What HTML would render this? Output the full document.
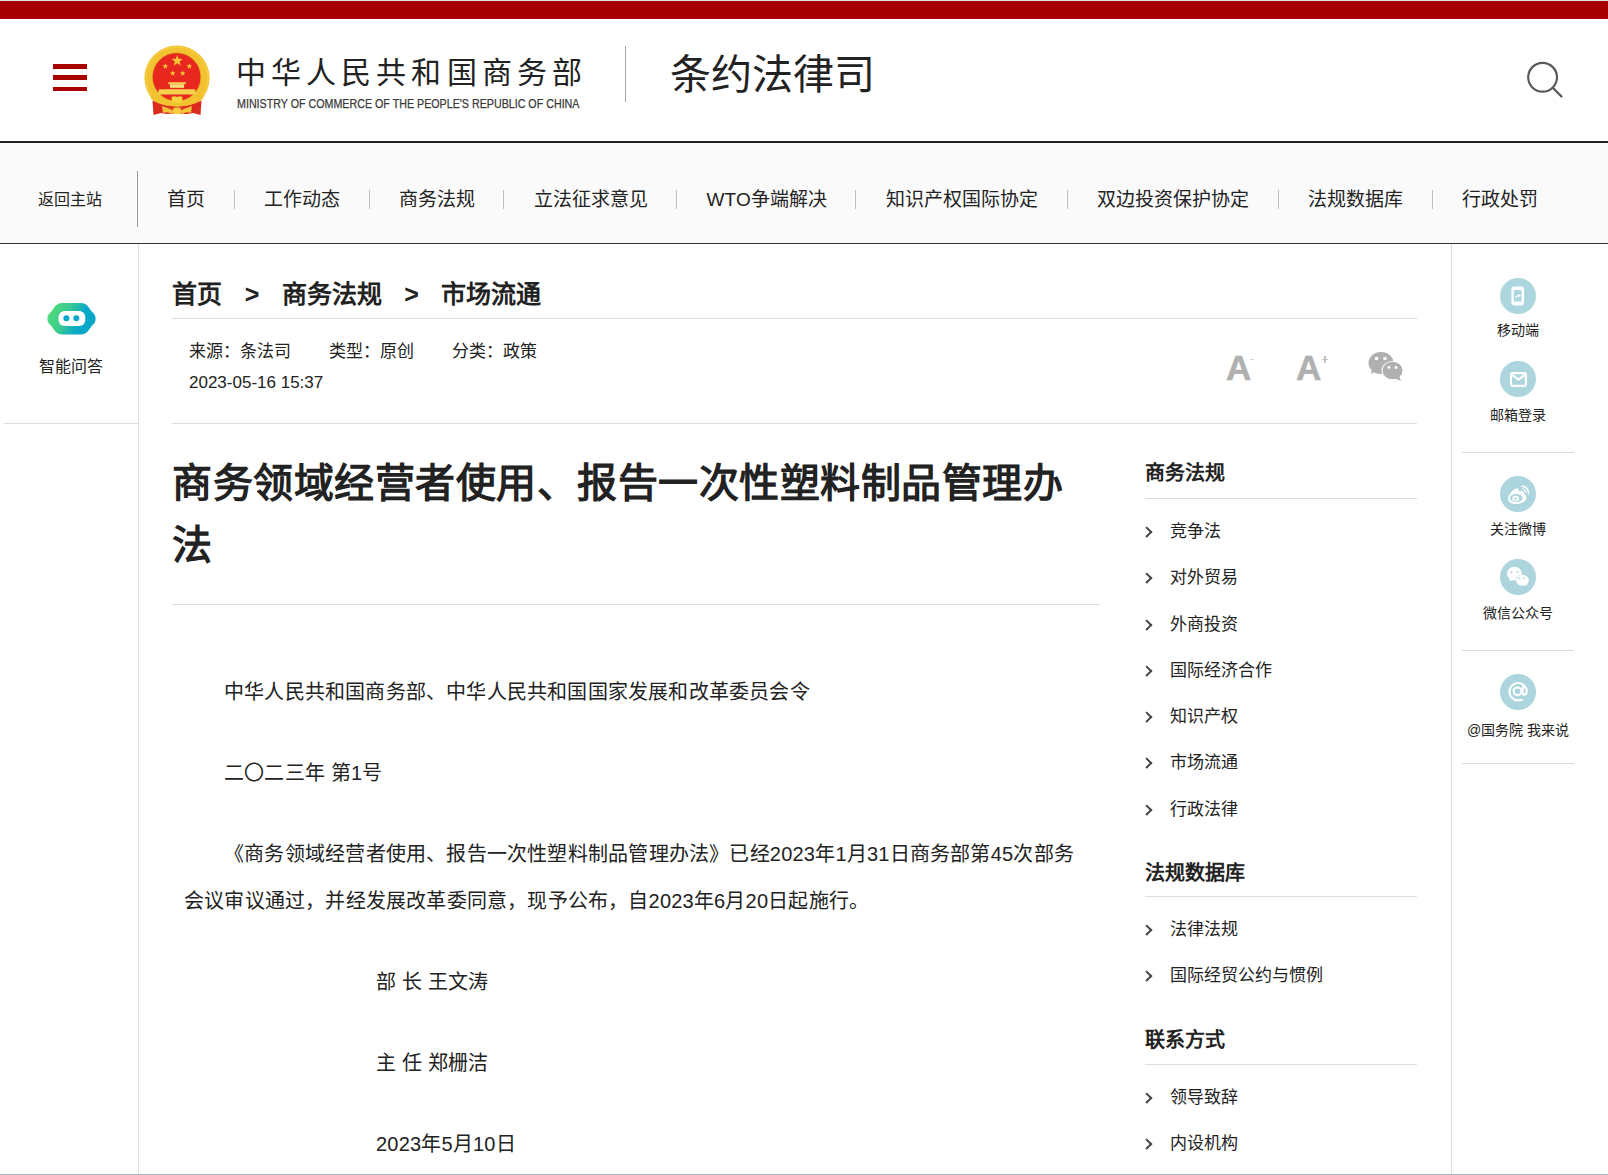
<!DOCTYPE html>
<html lang="zh-CN">
<head>
<meta charset="utf-8">
<title>商务领域经营者使用、报告一次性塑料制品管理办法</title>
<style>
*{margin:0;padding:0;box-sizing:border-box;}
html,body{width:1608px;height:1175px;overflow:hidden;background:#fff;}
body{font-family:"Liberation Sans",sans-serif;color:#222;position:relative;}
.abs{position:absolute;}
/* top bar */
.topline{left:0;top:0;width:1608px;height:1px;background:#dde6e6;}
.redbar{left:0;top:1px;width:1608px;height:18px;background:#a80000;}
/* header */
.burger{left:53px;width:34px;background:#a80000;}
.emblem{left:143px;top:44px;width:68px;height:72px;}
.cn-name{left:236px;top:54px;font-size:30px;line-height:38px;letter-spacing:5.1px;color:#222;white-space:nowrap;}
.en-name{left:237px;top:96px;font-size:12px;line-height:16px;color:#3a3a3a;white-space:nowrap;transform:scaleX(0.891);transform-origin:0 0;-webkit-text-stroke:0.25px #3a3a3a;}
.hdiv{left:625px;top:46px;width:1px;height:56px;background:#a6a6a6;}
.dept{left:670px;top:47.5px;font-size:41px;line-height:54px;color:#222;white-space:nowrap;}
.hline{left:0;top:141px;width:1608px;height:2px;background:#222;}
/* nav */
.nav{left:0;top:143px;width:1608px;height:100px;background:#fafafa;}
.navline{left:0;top:243px;width:1608px;height:1px;background:#333;}
.back{left:38px;top:188.5px;font-size:16px;line-height:22px;color:#222;white-space:nowrap;}
.navdiv{left:137px;top:171px;width:1px;height:56px;background:#9a9a9a;}
.menu{left:138px;top:188px;white-space:nowrap;font-size:0;}
.menu span{display:inline-block;font-size:19px;line-height:24px;color:#222;padding:0 29.25px;position:relative;letter-spacing:0.08px;}
.menu span+span::before{content:"";position:absolute;left:-1px;top:2px;width:1px;height:19px;background:#bfbfbf;}
/* side lines */
.lside{left:138px;top:244px;width:1px;height:931px;background:#ddd;}
.rside{left:1451px;top:244px;width:1px;height:931px;background:#ddd;}
.bottomline{left:0;top:1174px;width:1608px;height:1px;background:#adb3bf;}
.gray{background:#ddd;height:1px;}
.lbl{font-size:16px;line-height:20px;color:#222;white-space:nowrap;}
/* breadcrumb */
.crumb{left:172px;top:278px;font-size:25px;line-height:32px;font-weight:bold;color:#222;white-space:nowrap;}
.meta{left:189px;top:340px;font-size:17px;line-height:24px;color:#222;white-space:nowrap;}
.date{left:189px;top:371px;font-size:17px;line-height:24px;color:#222;white-space:nowrap;}
.title{left:172px;top:452px;width:915px;font-size:40px;letter-spacing:0.5px;line-height:62px;font-weight:bold;color:#222;}
.body{left:184px;top:669px;width:890px;font-size:20px;line-height:47px;color:#222;text-align:justify;letter-spacing:0.2px;}
.body p{margin-bottom:34px;text-indent:40px;}
/* right menu */
.rmenu{left:1145px;width:272px;}
.rhead{font-size:20px;line-height:28px;font-weight:bold;color:#222;white-space:nowrap;}
.ritem{font-size:17px;line-height:24px;color:#222;white-space:nowrap;padding-left:25px;position:relative;height:46.3px;}
.ritem::before{content:"";position:absolute;left:-2.5px;top:8px;width:5.6px;height:5.6px;border-right:2px solid #444;border-top:2px solid #444;transform:rotate(45deg);}
/* right icons */
.ic{left:1500px;width:36px;height:36px;border-radius:50%;background:#a9d3dc;}
.icl{left:1451px;width:134px;text-align:center;font-size:14px;line-height:18px;color:#222;white-space:nowrap;}
</style>
</head>
<body>
<div class="abs topline"></div>
<div class="abs redbar"></div>

<div class="abs burger" style="top:64px;height:5px"></div>
<div class="abs burger" style="top:75px;height:5px"></div>
<div class="abs burger" style="top:87px;height:4px"></div>

<svg class="abs emblem" viewBox="0 0 68 72" width="68" height="72">
<circle cx="34" cy="34" r="32.6" fill="#f2c230"/>
<circle cx="34" cy="34" r="31" fill="none" stroke="#f7d24a" stroke-width="1.5" opacity="0.7"/>
<circle cx="33.6" cy="33" r="24" fill="#e8281e"/>
<circle cx="33.6" cy="33" r="24.3" fill="none" stroke="#c99a20" stroke-width="0.7" opacity="0.6"/>
<polygon points="34.20,10.90 35.66,14.80 39.81,14.98 36.56,17.57 37.67,21.57 34.20,19.28 30.73,21.57 31.84,17.57 28.59,14.98 32.74,14.80" fill="#f3c73a"/>
<polygon points="22.30,19.40 23.02,21.31 25.06,21.40 23.46,22.68 24.00,24.65 22.30,23.52 20.60,24.65 21.14,22.68 19.54,21.40 21.58,21.31" fill="#f3c73a"/>
<polygon points="46.30,19.40 47.02,21.31 49.06,21.40 47.46,22.68 48.00,24.65 46.30,23.52 44.60,24.65 45.14,22.68 43.54,21.40 45.58,21.31" fill="#f3c73a"/>
<polygon points="29.70,26.40 30.42,28.31 32.46,28.40 30.86,29.68 31.40,31.65 29.70,30.52 28.00,31.65 28.54,29.68 26.94,28.40 28.98,28.31" fill="#f3c73a"/>
<polygon points="39.70,26.40 40.42,28.31 42.46,28.40 40.86,29.68 41.40,31.65 39.70,30.52 38.00,31.65 38.54,29.68 36.94,28.40 38.98,28.31" fill="#f3c73a"/>
<path d="M24.5 38.2 L43.5 38.2 L41.8 40.4 L26.2 40.4 Z" fill="#f4d45a"/>
<rect x="27" y="40.4" width="14" height="3.4" fill="#f8e07a"/>
<path d="M16 45.2 L52 45.2 L53 50.6 L15 50.6 Z" fill="#f5d24e"/>
<path d="M8.5 50 Q20 56.5 34 57.5 Q48 56.5 59.5 50 L60 55 Q48 62.5 34 63 Q20 62.5 8 55 Z" fill="#f2c230"/>
<path d="M9.5 56.5 Q20 62 30 62.5 L31 69.5 Q24 70.5 18 69 L10.5 71 Z" fill="#dd2a1f"/>
<path d="M58.5 56.5 Q48 62 38 62.5 L37 69.5 Q44 70.5 50 69 L57.5 71 Z" fill="#dd2a1f"/>
<path d="M26 61.5 Q34 64 42 61.5 L42 66 Q34 68 26 66 Z" fill="#e23a22"/>
<path d="M28.5 53 Q31 51.5 34 53 Q37 51.5 39.5 53 L39 58 Q34 60.5 29 58 Z" fill="#f7d23f"/>
<path d="M19 62 Q26 64 31 67 L29 70 Q24 67 20 69 Z" fill="#f3c43a"/>
<path d="M49 62 Q42 64 37 67 L39 70 Q44 67 48 69 Z" fill="#f3c43a"/>
<path d="M30 64.5 Q34 62.5 38 64.5 L37.5 69.5 Q34 71 30.5 69.5 Z" fill="#f5cc3e"/>
</svg>
<div class="abs cn-name">中华人民共和国商务部</div>
<div class="abs en-name">MINISTRY OF COMMERCE OF THE PEOPLE'S REPUBLIC OF CHINA</div>
<div class="abs hdiv"></div>
<div class="abs dept">条约法律司</div>
<svg class="abs" style="left:1520px;top:55px" width="50" height="50" viewBox="0 0 50 50"><circle cx="22.6" cy="22.3" r="14.4" fill="none" stroke="#5a5a5a" stroke-width="2.2"/><line x1="33" y1="33" x2="41.5" y2="41.5" stroke="#5a5a5a" stroke-width="2.4" stroke-linecap="round"/></svg>
<div class="abs hline"></div>

<div class="abs nav"></div>
<div class="abs navline"></div>
<div class="abs back">返回主站</div>
<div class="abs navdiv"></div>
<div class="abs menu"><span>首页</span><span>工作动态</span><span>商务法规</span><span>立法征求意见</span><span>WTO争端解决</span><span>知识产权国际协定</span><span>双边投资保护协定</span><span>法规数据库</span><span>行政处罚</span></div>

<div class="abs lside"></div>
<div class="abs rside"></div>
<div class="abs bottomline"></div>

<!-- left sidebar -->
<svg class="abs" style="left:46.5px;top:302px" width="50" height="34" viewBox="0 0 50 34">
<defs><linearGradient id="rg" x1="0" y1="0.35" x2="1" y2="0.65"><stop offset="0" stop-color="#50db78"/><stop offset="0.35" stop-color="#3ccb90"/><stop offset="0.68" stop-color="#0aa9c7"/><stop offset="1" stop-color="#0aa6c9"/></linearGradient></defs>
<path d="M15 1 L34 1 Q38.5 1 41.5 5 L45 10 Q48.6 12.5 48.6 16.8 Q48.6 21 45 23.6 L41.5 28.6 Q38.5 32.6 34 32.6 L15 32.6 Q10.5 32.6 7.5 28.6 L4 23.6 Q0.4 21 0.4 16.8 Q0.4 12.5 4 10 L7.5 5 Q10.5 1 15 1 Z" fill="url(#rg)"/>
<rect x="11.5" y="9" width="26.8" height="15" rx="6" fill="#fff"/>
<circle cx="19.4" cy="16.3" r="3" fill="#08a6c8"/><circle cx="29.3" cy="16.3" r="3" fill="#08a6c8"/>
</svg>
<div class="abs lbl" style="left:39px;top:357px">智能问答</div>
<div class="abs gray" style="left:4px;top:423px;width:134px"></div>

<!-- breadcrumb & meta -->
<div class="abs crumb">首页<span style="display:inline-block;width:60px;text-align:center;font-weight:bold">&gt;</span>商务法规<span style="display:inline-block;width:59px;text-align:center">&gt;</span>市场流通</div>
<div class="abs gray" style="left:172px;top:318px;width:1245px"></div>
<div class="abs meta">来源：条法司<span style="display:inline-block;width:38px"></span>类型：原创<span style="display:inline-block;width:38px"></span>分类：政策</div>
<div class="abs date">2023-05-16 15:37</div>
<div class="abs gray" style="left:172px;top:423px;width:1245px"></div>

<!-- font size / share -->
<div class="abs" style="left:1226px;top:345.5px;font-size:35px;line-height:44px;font-weight:bold;color:#b0b0b0;-webkit-text-stroke:0.5px #b0b0b0">A</div>
<div class="abs" style="left:1250px;top:358.5px;width:4px;height:1.2px;background:#d4d4d4"></div>
<div class="abs" style="left:1296px;top:345.5px;font-size:35px;line-height:44px;font-weight:bold;color:#b0b0b0;-webkit-text-stroke:0.5px #b0b0b0">A</div>
<div class="abs" style="left:1322px;top:359px;width:6px;height:1.3px;background:#c0c0c0"></div>
<div class="abs" style="left:1324.3px;top:356.3px;width:1.3px;height:6.3px;background:#c0c0c0"></div>
<svg class="abs" style="left:1368px;top:351px" width="37" height="31" viewBox="0 0 37 31">
<ellipse cx="13" cy="12" rx="12.5" ry="11" fill="#b0b0b0"/>
<path d="M4 18 L3 23 L9 20 Z" fill="#b0b0b0"/>
<ellipse cx="24.5" cy="19.5" rx="11" ry="9.5" fill="#fff"/>
<ellipse cx="24.5" cy="19.5" rx="10" ry="8.8" fill="#b0b0b0"/>
<path d="M31 25 L33 30 L27 27.5 Z" fill="#b0b0b0"/>
<circle cx="8.5" cy="7.5" r="1.8" fill="#fff"/><circle cx="17" cy="7.5" r="1.8" fill="#fff"/>
<circle cx="21" cy="16.5" r="1.4" fill="#fff"/><circle cx="28" cy="16.5" r="1.4" fill="#fff"/>
</svg>

<!-- title -->
<div class="abs title">商务领域经营者使用、报告一次性塑料制品管理办法</div>
<div class="abs gray" style="left:172px;top:604px;width:928px"></div>

<!-- body -->
<div class="abs body">
<p>中华人民共和国商务部、中华人民共和国国家发展和改革委员会令</p>
<p>二〇二三年 第1号</p>
<p>《商务领域经营者使用、报告一次性塑料制品管理办法》已经2023年1月31日商务部第45次部务会议审议通过，并经发展改革委同意，现予公布，自2023年6月20日起施行。</p>
<p style="padding-left:152px">部 长 王文涛</p>
<p style="padding-left:152px">主 任 郑栅洁</p>
<p style="padding-left:152px">2023年5月10日</p>
</div>

<!-- right menu -->
<div class="abs rmenu" style="top:458.5px">
<div class="rhead">商务法规</div>
</div>
<div class="abs gray" style="left:1145px;top:498px;width:272px"></div>
<div class="abs rmenu" style="top:520px">
<div class="ritem">竞争法</div><div class="ritem">对外贸易</div><div class="ritem">外商投资</div><div class="ritem">国际经济合作</div><div class="ritem">知识产权</div><div class="ritem">市场流通</div><div class="ritem">行政法律</div>
</div>
<div class="abs rmenu" style="top:859px"><div class="rhead">法规数据库</div></div>
<div class="abs gray" style="left:1145px;top:896px;width:272px"></div>
<div class="abs rmenu" style="top:918px">
<div class="ritem">法律法规</div><div class="ritem">国际经贸公约与惯例</div>
</div>
<div class="abs rmenu" style="top:1026px"><div class="rhead">联系方式</div></div>
<div class="abs gray" style="left:1145px;top:1064px;width:272px"></div>
<div class="abs rmenu" style="top:1085.5px">
<div class="ritem">领导致辞</div><div class="ritem">内设机构</div>
</div>

<!-- right icons -->
<svg class="abs" style="left:1498px;top:276px" width="40" height="40" viewBox="0 0 40 40"><circle cx="20" cy="20" r="18" fill="#acd5de"/><rect x="14.6" y="11.8" width="10.2" height="16.4" rx="1.6" fill="none" stroke="#fff" stroke-width="2.4"/><rect x="14.6" y="11" width="10.2" height="3" fill="#fff"/><rect x="14.6" y="25.6" width="10.2" height="3.4" rx="1.5" fill="#fff"/><path d="M17.3 21.8 Q18.6 19.6 21.2 19.6" fill="none" stroke="#fff" stroke-width="1.2"/><path d="M20.6 17.9 L23.2 19.6 L20.6 21.3 Z" fill="#fff"/></svg>
<div class="abs icl" style="top:321px">移动端</div>
<svg class="abs" style="left:1498px;top:359px" width="40" height="40" viewBox="0 0 40 40"><circle cx="20" cy="20" r="18" fill="#acd5de"/><rect x="13" y="14.1" width="14.9" height="12.8" rx="2" fill="none" stroke="#fff" stroke-width="2.1"/><path d="M13.8 15.6 L20.4 20.6 L27.1 15.6" fill="none" stroke="#fff" stroke-width="2.1"/></svg>
<div class="abs icl" style="top:406px">邮箱登录</div>
<div class="abs gray" style="left:1462px;top:452px;width:112px"></div>
<svg class="abs" style="left:1498px;top:474px" width="40" height="40" viewBox="0 0 40 40"><circle cx="20" cy="20" r="18" fill="#acd5de"/><path d="M18.6 14.2 Q20.8 14 20.7 17.4 Q24.5 16.6 25.4 17.6 Q26.4 18.8 26.1 20.2 Q28.8 21.2 28.6 23.8 Q28.2 28.4 19.5 30 Q12 30.6 10.3 26 Q9.4 22.4 13 18.4 Q16 14.8 18.6 14.2 Z" fill="#fff"/><ellipse cx="18.2" cy="24.2" rx="6.3" ry="4.1" fill="#acd5de"/><ellipse cx="17.6" cy="24.6" rx="3.4" ry="2.9" fill="#fff"/><ellipse cx="17.2" cy="25" rx="1.7" ry="1.4" fill="#acd5de"/><circle cx="16.8" cy="25.3" r="0.6" fill="#fff"/><path d="M24 12.2 Q30 12.6 30.6 19.3" fill="none" stroke="#fff" stroke-width="1.6" stroke-linecap="round"/><path d="M24.3 14.9 Q27.6 15.3 27.9 18.6" fill="none" stroke="#fff" stroke-width="1.4" stroke-linecap="round" opacity="0.85"/></svg>
<div class="abs icl" style="top:520px">关注微博</div>
<svg class="abs" style="left:1498px;top:557px" width="40" height="40" viewBox="0 0 40 40"><circle cx="20" cy="20" r="18" fill="#acd5de"/><ellipse cx="16.4" cy="16.7" rx="7.4" ry="6.9" fill="#fff"/><path d="M11.4 21 L12 24.6 L15.6 22.6 Z" fill="#fff"/><ellipse cx="24.4" cy="23.2" rx="6.9" ry="5.8" fill="#acd5de"/><ellipse cx="24.4" cy="23.3" rx="6.5" ry="5.5" fill="#fff"/><path d="M27 27.2 L29 29.2 L28.8 25.6 Z" fill="#fff"/><circle cx="13.5" cy="15.2" r="1" fill="#acd5de"/><circle cx="19.6" cy="15.2" r="1" fill="#acd5de"/><circle cx="21.6" cy="21.2" r="0.9" fill="#acd5de"/><circle cx="26.3" cy="21.2" r="0.9" fill="#acd5de"/></svg>
<div class="abs icl" style="top:604px">微信公众号</div>
<div class="abs gray" style="left:1462px;top:650px;width:112px"></div>
<svg class="abs" style="left:1498px;top:672px" width="40" height="40" viewBox="0 0 40 40"><circle cx="20" cy="20" r="18" fill="#acd5de"/><path d="M24.6 27.5 Q22.4 28.4 19.9 28.4 A8.7 8.7 0 1 1 28.8 19.6 Q28.8 22.7 26.2 22.7 Q24.2 22.7 24.5 20.4 L25.1 14" fill="none" stroke="#fff" stroke-width="2.1"/><ellipse cx="19.5" cy="19.3" rx="3.9" ry="3.8" fill="none" stroke="#fff" stroke-width="2.1"/></svg>
<div class="abs icl" style="top:721px">@国务院 我来说</div>
<div class="abs gray" style="left:1462px;top:763px;width:112px"></div>


</body>
</html>
